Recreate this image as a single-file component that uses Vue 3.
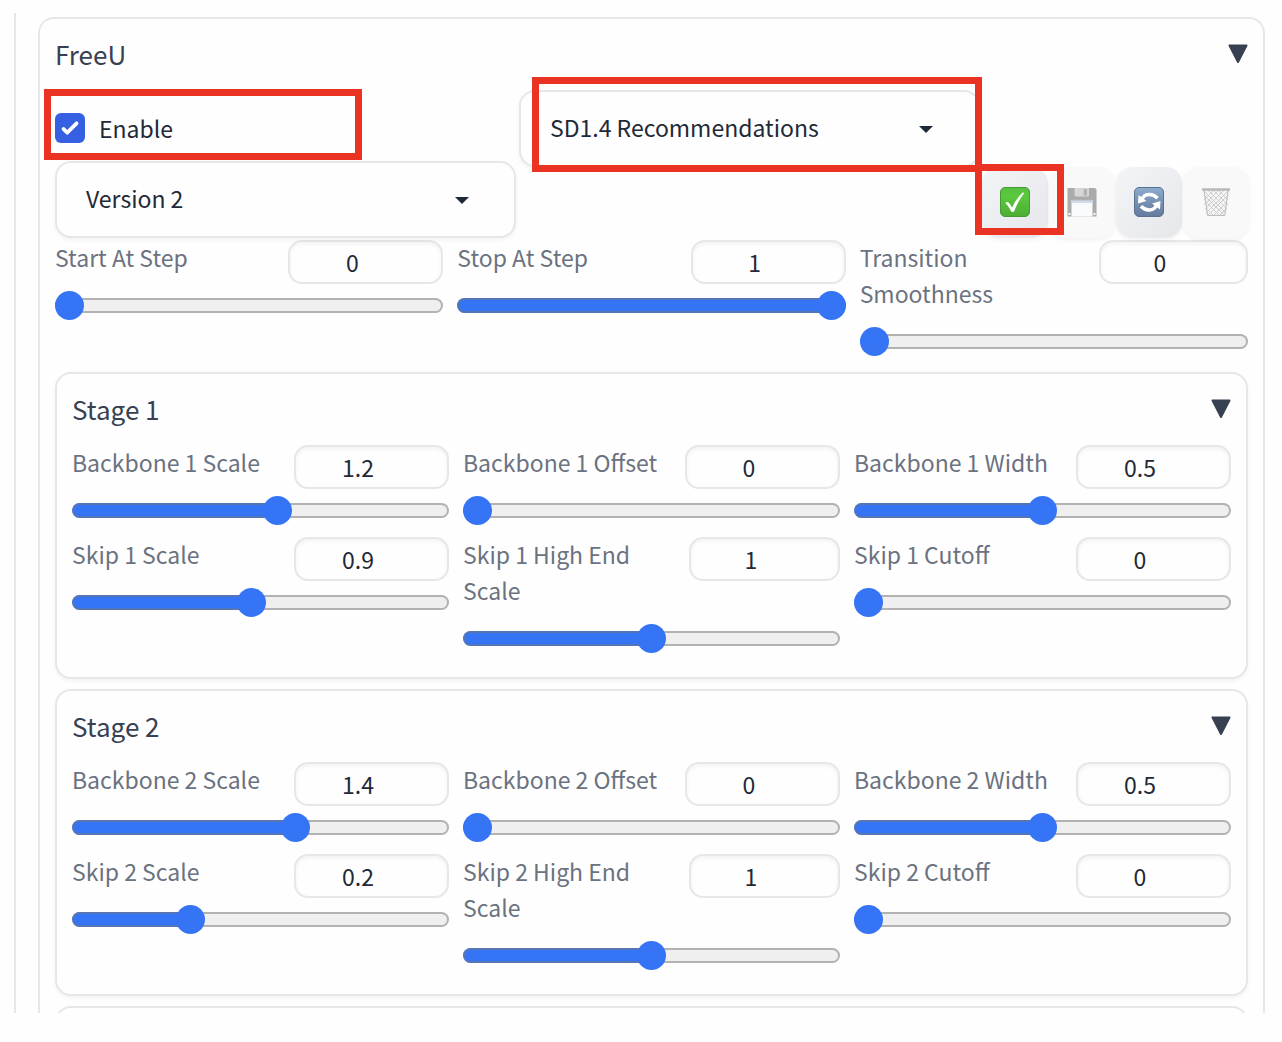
<script setup>
import { reactive, ref } from 'vue'

const enabled = ref(true)
const version = ref('Version 2')
const preset = ref('SD1.4 Recommendations')

const steps = reactive([
  { id: 'start', label: 'Start At Step', value: 0, min: 0, max: 1, step: 0.01 },
  { id: 'stop', label: 'Stop At Step', value: 1, min: 0, max: 1, step: 0.01 },
  { id: 'smooth', label: 'Transition Smoothness', value: 0, min: 0, max: 1, step: 0.01 },
])

function makeStage(n, backbone, skip) {
  return {
    n,
    controls: [
      { id: `b${n}-scale`, label: `Backbone ${n} Scale`, value: backbone, min: -1, max: 3, step: 0.01 },
      { id: `b${n}-offset`, label: `Backbone ${n} Offset`, value: 0, min: 0, max: 1, step: 0.01 },
      { id: `b${n}-width`, label: `Backbone ${n} Width`, value: 0.5, min: 0, max: 1, step: 0.01 },
      { id: `s${n}-scale`, label: `Skip ${n} Scale`, value: skip, min: -1, max: 3, step: 0.01 },
      { id: `s${n}-high`, label: `Skip ${n} High End Scale`, value: 1, min: -1, max: 3, step: 0.01 },
      { id: `s${n}-cutoff`, label: `Skip ${n} Cutoff`, value: 0, min: 0, max: 1, step: 0.01 },
    ],
  }
}

const stages = reactive([makeStage(1, 1.2, 0.9), makeStage(2, 1.4, 0.2)])

const groups = [{ n: 0, controls: steps }, ...stages]

function fill(c) {
  return { '--fill': ((c.value - c.min) / (c.max - c.min)) * 100 + '%' }
}
</script>

<template>
  <main class="frame">
    <section class="panel">
      <h2 class="head">
        <span>FreeU</span>
        <svg class="fold" viewBox="0 0 20 20" aria-hidden="true"><path d="M1.5 1.500H18.500L10 18Z" /></svg>
      </h2>

      <div class="top">
        <div class="left">
          <div class="enable">
            <label class="check">
              <input v-model="enabled" type="checkbox" />
              <span>Enable</span>
            </label>
            <div class="mark mark-enable"></div>
          </div>
          <div class="drop">
            <select v-model="version" aria-label="Version">
              <option>Version 1</option>
              <option>Version 2</option>
            </select>
            <svg class="caret" viewBox="0 0 14 8" aria-hidden="true"><path d="M0 0H14L7 7Z" /></svg>
          </div>
        </div>

        <div class="middle">
          <div class="drop">
            <select v-model="preset" aria-label="Preset">
              <option>SD1.4 Recommendations</option>
              <option>SDXL Recommendations</option>
            </select>
            <svg class="caret" viewBox="0 0 14 8" aria-hidden="true"><path d="M0 0H14L7 7Z" /></svg>
            <div class="mark mark-preset"></div>
          </div>
        </div>

        <div class="actions">
          <button type="button" class="tool" aria-label="Apply preset">
            <svg viewBox="0 0 30 30" aria-hidden="true">
              <defs>
                <linearGradient id="green" x1="0" y1="0" x2="0" y2="1">
                  <stop offset="0" stop-color="#58bf40" />
                  <stop offset="0.3" stop-color="#5bc83e" />
                  <stop offset="1" stop-color="#4cae31" />
                </linearGradient>
              </defs>
              <rect x="0.5" y="0.5" width="29" height="29" rx="4.5" fill="url(#green)" stroke="#459a35" />
              <path d="M5.5 16.2C6 15 7.600 14.600 8.600 15.600C10 17 11.200 19 12 20.800C14.500 15 18.500 9.500 22.500 5.700C23.300 5.200 24.200 5.700 23.900 6.500C19.500 12.500 16.500 18 14.200 24.200C13.600 25.300 11.600 25.300 11 24.200C9.800 21.300 7.800 18.500 5.500 16.200Z" fill="#fff" />
            </svg>
            <span class="mark mark-apply"></span>
          </button>
          <button type="button" class="tool off" disabled aria-label="Save preset">
            <svg viewBox="0 0 30 30" aria-hidden="true">
              <path d="M0.500 1H28L29.500 2.500V29.500H0.500Z" fill="#5f5f5f" />
              <path d="M7.500 1H22V8.500Q22 9.500 21 9.500H8.500Q7.500 9.500 7.500 8.500Z" fill="#b4b8b6" />
              <path d="M16.500 2H20V8.500H16.500Z" fill="#6c706f" />
              <path d="M4.500 13H25.500V29.500H4.500Z" fill="#fafcff" />
              <path d="M4.500 13H25.500V16H4.500Z" fill="#a9bfe2" />
              <path d="M4.500 13H25.500" stroke="#777" />
              <path d="M1.500 26H3.500V28H1.500ZM26.500 26H28.500V28H26.500Z" fill="#fff" />
            </svg>
          </button>
          <button type="button" class="tool" aria-label="Refresh presets">
            <svg viewBox="0 0 30 30" aria-hidden="true">
              <defs>
                <linearGradient id="blue" x1="0" y1="0" x2="0" y2="1">
                  <stop offset="0" stop-color="#8fabce" />
                  <stop offset="0.500" stop-color="#7490b3" />
                  <stop offset="1" stop-color="#647c9c" />
                </linearGradient>
              </defs>
              <rect x="0.500" y="0.500" width="29" height="29" rx="4.500" fill="url(#blue)" stroke="#5b728f" />
              <path d="M8 12.500C10 6.500 18.500 5.800 23.500 11.200" fill="none" stroke="#fff" stroke-width="3.500" />
              <path d="M4.500 8L4 16.500L12.500 14Z" fill="#fff" />
              <path d="M22.500 18C20.500 24 12 24.700 7 19.300" fill="none" stroke="#fff" stroke-width="3.500" />
              <path d="M26 22.500L26.500 14L18 16.500Z" fill="#fff" />
            </svg>
          </button>
          <button type="button" class="tool off" disabled aria-label="Delete preset">
            <svg viewBox="0 0 30 30" aria-hidden="true">
              <path d="M2 3H28L24.500 29H6Z" fill="#f2f2f2" />
              <path d="M3 8L23 28M3 4L25 26M7 3L26 22M12 3L27 18M17 3L27 13M5 15L19 29M6 22L13 29M27 8L7 28M27 4L5 26M23 3L4 22M18 3L3 18M13 3L3 13M26 15L12 29M25 22L18 29" fill="none" stroke="#94989c" stroke-width="0.900" />
              <path d="M3 3L6.500 28.500H23.800L27.200 3" fill="none" stroke="#7c8084" />
              <path d="M1 2.500H29" stroke="#75797d" stroke-width="2.500" />
            </svg>
          </button>
        </div>
      </div>

      <template v-for="g in groups" :key="g.n">
        <section :class="g.n ? 'panel stage' : 'steps'">
          <h3 v-if="g.n" class="head">
            <span>Stage {{ g.n }}</span>
            <svg class="fold" viewBox="0 0 20 20" aria-hidden="true"><path d="M1.5 1.500H18.500L10 18Z" /></svg>
          </h3>
          <div class="grid">
            <div v-for="c in g.controls" :key="c.id" class="control">
              <div class="caption">
                <label :for="c.id">{{ c.label }}</label>
                <input :id="c.id" v-model.number="c.value" class="number" type="text" inputmode="decimal" />
              </div>
              <input
                v-model.number="c.value"
                class="range"
                type="range"
                :min="c.min"
                :max="c.max"
                :step="c.step"
                :aria-label="c.label"
                :style="fill(c)"
              />
            </div>
          </div>
        </section>
      </template>
      <div class="peek">
        <div class="panel next"></div>
      </div>
    </section>
  </main>
</template>

<style>
body {
  margin: 0;
  background: #fefefe;
}
</style>

<style scoped>
* {
  box-sizing: border-box;
}

.frame {
  margin: 13px 0 0 14px;
  padding: 4px 17px 0 22px;
  border-left: 2px solid #e5e7eb;
  font-family: "Noto Sans CJK SC", "Noto Sans", sans-serif;
  font-size: 23px;
  line-height: 36px;
  color: #1f2937;
}

.panel {
  padding: 0 15px;
  border: 2px solid #e5e7eb;
  border-radius: 16px;
  background: #fefefe;
  box-shadow: 0 2px 4px rgba(0, 0, 0, 0.05);
}

.frame > .panel {
  border-bottom: 0;
  border-radius: 16px 16px 0 0;
  box-shadow: none;
}

.head {
  display: flex;
  align-items: center;
  justify-content: space-between;
  height: 71px;
  margin: 0;
  padding-bottom: 2px;
  font-size: 26px;
  font-weight: 400;
  color: #374151;
}

.fold {
  width: 20px;
  height: 20px;
  fill: #374151;
  stroke: #374151;
  stroke-width: 2;
  stroke-linejoin: round;
}

.top {
  display: flex;
}

.left {
  flex: 1;
  margin-right: 3px;
}

.middle {
  flex: 1;
  margin-right: 2px;
}

.enable {
  position: relative;
  height: 71px;
  padding-top: 20px;
}

.check {
  display: inline-flex;
  align-items: center;
  gap: 14px;
}

.check input {
  appearance: none;
  width: 30px;
  height: 30px;
  margin: 0;
  border-radius: 6px;
  background: #3560e2 url("data:image/svg+xml,%3Csvg viewBox='0 0 16 16' fill='white' xmlns='http://www.w3.org/2000/svg'%3E%3Cpath d='M12.207 4.793a1 1 0 010 1.414l-5 5a1 1 0 01-1.414 0l-2-2a1 1 0 011.414-1.414L6.500 9.086l4.293-4.293a1 1 0 011.414 0z'/%3E%3C/svg%3E") center / 100% no-repeat;
}

.drop {
  position: relative;
}

.drop select {
  appearance: none;
  display: block;
  width: 100%;
  height: 77px;
  padding: 0 60px 3px 29px;
  border: 2px solid #e5e7eb;
  border-radius: 16px;
  background: #fefefe;
  box-shadow: 0 2px 4px rgba(0, 0, 0, 0.05);
  font: inherit;
  color: inherit;
}

.caret {
  position: absolute;
  top: 36px;
  right: 47px;
  width: 14px;
  height: 8px;
  fill: #1f2937;
  pointer-events: none;
}

.actions {
  display: flex;
  align-items: flex-end;
  gap: 1px;
  margin-right: -1px;
}

.tool {
  position: relative;
  display: flex;
  align-items: center;
  justify-content: center;
  width: 66px;
  height: 71px;
  padding: 0 0 2px;
  border: 0;
  border-radius: 16px;
  background: linear-gradient(to bottom right, #f3f4f6, #e5e7eb);
  box-shadow: 0 2px 4px rgba(0, 0, 0, 0.05);
}

.tool svg {
  width: 30px;
  height: 30px;
}

.off {
  background: #f9f9f9;
}

.off svg {
  opacity: 0.5;
}

.mark {
  position: absolute;
  z-index: 1;
  border: 7px solid #eb3323;
  pointer-events: none;
}

.mark-enable {
  inset: -1px auto auto -11px;
  width: 318px;
  height: 71px;
}

.mark-preset {
  inset: -13px -2px -5px 13px;
}

.mark-apply {
  inset: -3px -16px 3px -7px;
}

.steps {
  margin: 2px 0 16px;
}

.stage {
  margin-bottom: 10px;
  padding-bottom: 24px;
}

.grid {
  display: grid;
  grid-template-columns: repeat(3, minmax(0, 1fr));
  gap: 12px 14px;
}

.caption {
  display: flex;
  align-items: flex-start;
  justify-content: space-between;
  padding-bottom: 8px;
  gap: 4px;
  color: #6b7280;
}

.caption label {
  margin: -1px 0 1px;
}

.number {
  width: 155px;
  min-width: 0;
  height: 44px;
  margin: 0 0 -8px;
  padding: 0 29px 1px 2px;
  border: 2px solid #e5e7eb;
  border-radius: 14px;
  background: #fefefe;
  box-shadow: inset 0 2px 4px rgba(0, 0, 0, 0.05);
  font: inherit;
  text-align: center;
  color: #1f2937;
}

.range {
  appearance: none;
  display: block;
  width: 100%;
  height: 29px;
  margin: 7px 0 0;
  background: transparent;
}

.range::-webkit-slider-runnable-track {
  height: 15px;
  border-radius: 8px;
  background: linear-gradient(to right, #3574f5 var(--fill), #efefef var(--fill));
  box-shadow: inset 0 0 0 2px rgba(118, 118, 118, 0.5);
}

.range::-webkit-slider-thumb {
  appearance: none;
  width: 29px;
  height: 29px;
  margin-top: -7px;
  border-radius: 50%;
  background: #3574f5;
}

.peek {
  height: 7px;
  overflow: hidden;
}

.next {
  height: 40px;
}
</style>
